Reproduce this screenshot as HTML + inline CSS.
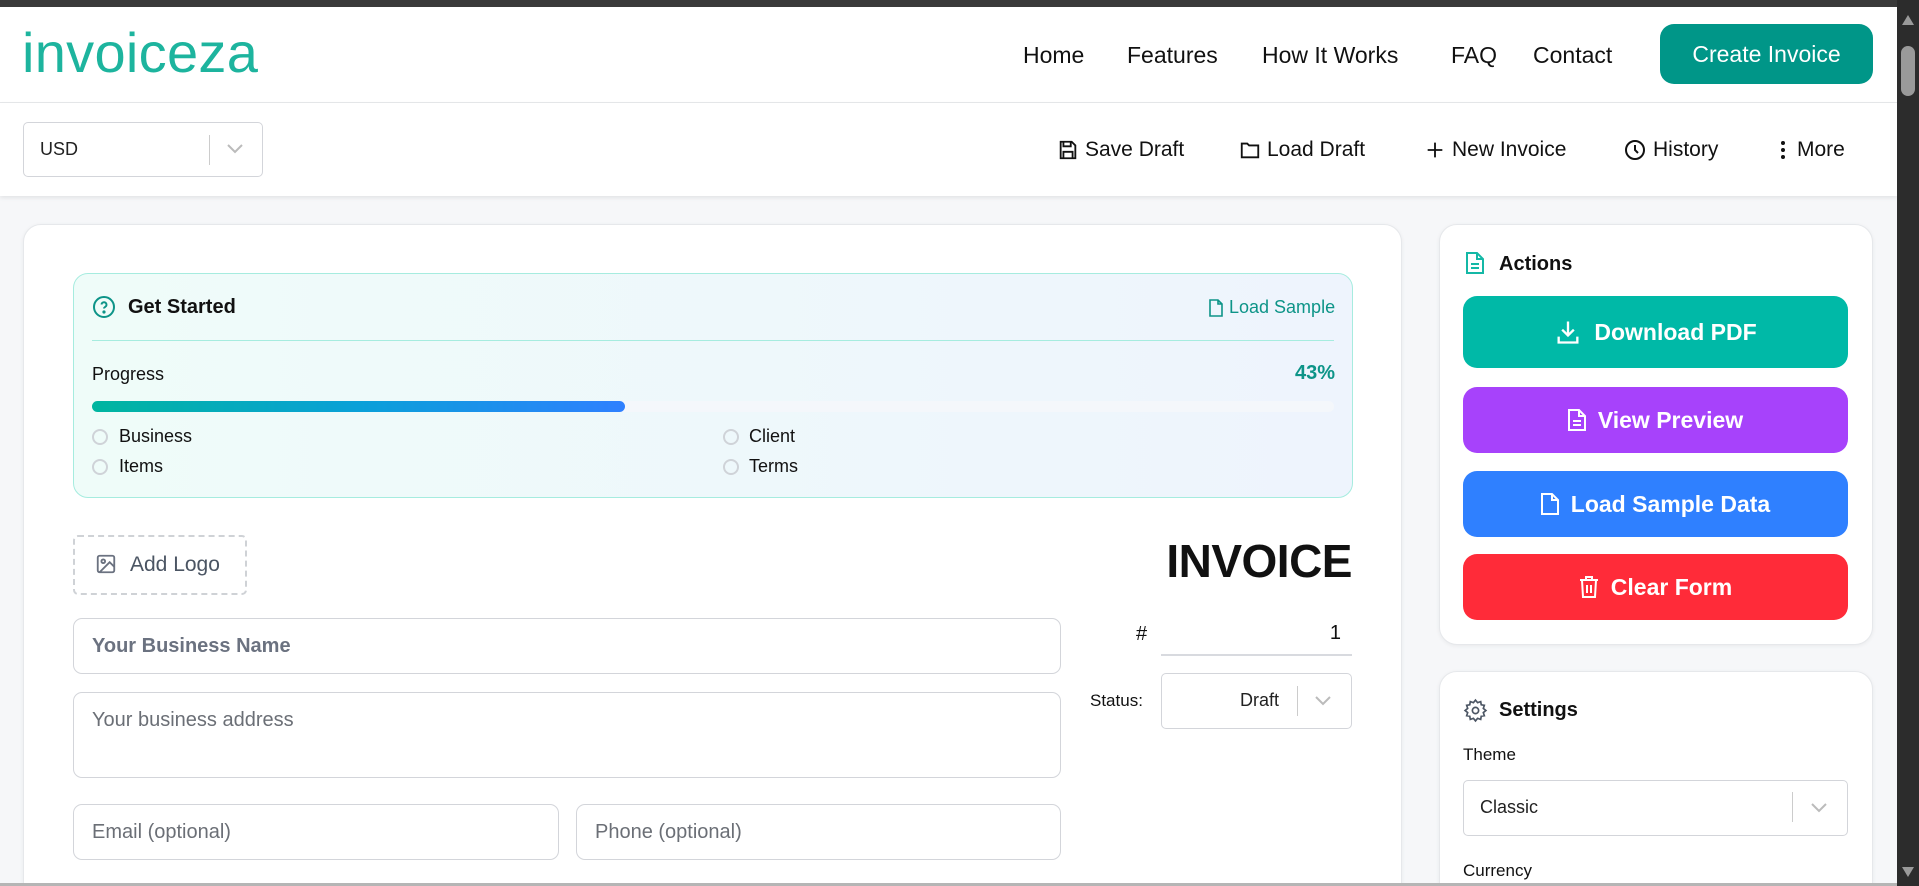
<!DOCTYPE html>
<html style="overflow:hidden;width:1919px;height:886px"><head><meta charset="utf-8"><style>
*{box-sizing:border-box;margin:0;padding:0}
body{width:1919px;height:886px;overflow:hidden;background:#f6f7f9;font-family:"Liberation Sans",sans-serif;color:#111;position:relative}
.a{position:absolute}
.topbar{left:0;top:0;width:1919px;height:7px;background:#3a3a3a}
.sb{left:1897px;top:0;width:22px;height:886px;background:#2c2c2c}
.nav{left:0;top:7px;width:1897px;height:96px;background:#fff;border-bottom:1px solid #e6e7ea}
.logo{left:22px;top:20px;font-size:56px;color:#1db49e;letter-spacing:0.3px}
.nl{top:42px;font-size:23px;color:#111}
.cbtn{left:1660px;top:24px;width:213px;height:60px;background:#009688;border-radius:14px;color:#fff;font-size:23px;text-align:center;line-height:60px}
.tb{left:0;top:103px;width:1897px;height:93px;background:#fff;box-shadow:0 2px 4px rgba(0,0,0,.08)}
.sel{border:1px solid #d3d5da;border-radius:5px;background:#fff}
.ti{top:138px;font-size:21px;color:#111;display:flex;align-items:center;gap:6px}
.card{background:#fff;border:1px solid #e6e8eb;border-radius:18px;box-shadow:0 1px 4px rgba(0,0,0,.06)}
.inp{border:1px solid #d3d5da;border-radius:9px;background:#fff;color:#6b6f76;font-size:20px;padding-left:18px}
.btn{left:1463px;width:385px;border-radius:14px;color:#fff;font-size:23px;font-weight:bold;display:flex;align-items:center;justify-content:center;gap:12px}
.ci{width:16px;height:16px;border:2px solid #cfd3d8;border-radius:50%}
</style></head><body>
<div class="a topbar"></div>
<div class="a nav"></div>
<div class="a logo">invoiceza</div>
<div class="a nl" style="left:1023px">Home</div>
<div class="a nl" style="left:1127px">Features</div>
<div class="a nl" style="left:1262px">How It Works</div>
<div class="a nl" style="left:1451px">FAQ</div>
<div class="a nl" style="left:1533px">Contact</div>
<div class="a cbtn">Create Invoice</div>

<div class="a tb"></div>
<div class="a sel" style="left:23px;top:122px;width:240px;height:55px"></div>
<div class="a" style="left:40px;top:139px;font-size:18px;color:#222">USD</div>
<div class="a" style="left:209px;top:135px;width:1px;height:30px;background:#ccc"></div>
<svg class="a" style="left:226px;top:143px" width="18" height="12" viewBox="0 0 18 12"><path d="M2 2l7 7 7-7" fill="none" stroke="#bbb" stroke-width="2"/></svg>

<div class="a ti" style="left:1057px"><svg width="22" height="22" viewBox="0 0 24 24" fill="none" stroke="#111" stroke-width="2"><path d="M5 3h11l4 4v14H4V3z"/><path d="M7 3v5h8V3M7 21v-7h10v7"/></svg>Save Draft</div>
<div class="a ti" style="left:1239px"><svg width="22" height="22" viewBox="0 0 24 24" fill="none" stroke="#111" stroke-width="2"><path d="M3 5h6l2 2h10v13H3z"/></svg>Load Draft</div>
<div class="a ti" style="left:1424px"><svg width="22" height="22" viewBox="0 0 24 24" fill="none" stroke="#111" stroke-width="2"><path d="M12 4v16M4 12h16"/></svg>New Invoice</div>
<div class="a ti" style="left:1623px"><svg width="24" height="24" viewBox="0 0 24 24" fill="none" stroke="#111" stroke-width="2"><circle cx="12" cy="12" r="9"/><path d="M12 7v5l3 3"/></svg>History</div>
<div class="a ti" style="left:1775px"><svg width="16" height="22" viewBox="0 0 16 22" fill="#111"><circle cx="8" cy="4" r="2"/><circle cx="8" cy="11" r="2"/><circle cx="8" cy="18" r="2"/></svg>More</div>

<div class="a card" style="left:23px;top:224px;width:1379px;height:680px"></div>
<div class="a" style="left:73px;top:273px;width:1280px;height:225px;border:1px solid #a6ecdf;border-radius:15px;background:linear-gradient(90deg,#effcf9,#eef4fd)"></div>
<svg class="a" style="left:92px;top:295px" width="24" height="24" viewBox="0 0 24 24" fill="none" stroke="#0d9488" stroke-width="2"><circle cx="12" cy="12" r="10"/><path d="M9.5 9.5a2.5 2.5 0 015 .5c0 1.7-2.5 2-2.5 3.5"/><circle cx="12" cy="17" r=".6" fill="#0d9488"/></svg>
<div class="a" style="left:128px;top:296px;font-size:20px;font-weight:bold">Get Started</div>
<div class="a" style="left:1209px;top:297px;font-size:18px;color:#0d9488;display:flex;align-items:center;gap:6px"><svg width="14" height="18" viewBox="0 0 14 18" fill="none" stroke="#0d9488" stroke-width="1.6"><path d="M1 1h8l4 4v12H1z M9 1v4h4"/></svg>Load Sample</div>
<div class="a" style="left:92px;top:340px;width:1242px;height:1px;background:#a6ecdf"></div>
<div class="a" style="left:92px;top:364px;font-size:18px">Progress</div>
<div class="a" style="left:1285px;top:362px;width:50px;text-align:right;font-size:20px;font-weight:bold;color:#0d9488">43%</div>
<div class="a" style="left:92px;top:401px;width:1242px;height:11px;border-radius:6px;background:#f4f7fb"></div>
<div class="a" style="left:92px;top:401px;width:533px;height:11px;border-radius:6px;background:linear-gradient(90deg,#00b59f,#0aa0d8,#2f80ff)"></div>
<div class="a ci" style="left:92px;top:429px"></div><div class="a" style="left:119px;top:426px;font-size:18px">Business</div>
<div class="a ci" style="left:92px;top:459px"></div><div class="a" style="left:119px;top:456px;font-size:18px">Items</div>
<div class="a ci" style="left:723px;top:429px"></div><div class="a" style="left:749px;top:426px;font-size:18px">Client</div>
<div class="a ci" style="left:723px;top:459px"></div><div class="a" style="left:749px;top:456px;font-size:18px">Terms</div>

<div class="a" style="left:73px;top:535px;width:174px;height:60px;border:2px dashed #cfd2d6;border-radius:5px"></div>
<svg class="a" style="left:95px;top:553px" width="22" height="22" viewBox="0 0 24 24" fill="none" stroke="#6b7280" stroke-width="2"><rect x="3" y="3" width="18" height="18" rx="2"/><circle cx="9" cy="9" r="2"/><path d="M21 15l-5-5L5 21"/></svg>
<div class="a" style="left:130px;top:553px;font-size:21px;color:#4b5563">Add Logo</div>
<div class="a" style="left:1100px;top:534px;width:252px;text-align:right;font-size:46px;font-weight:bold;letter-spacing:-0.5px">INVOICE</div>

<div class="a inp" style="left:73px;top:618px;width:988px;height:56px;line-height:54px;font-weight:bold;color:#6b7280">Your Business Name</div>
<div class="a inp" style="left:73px;top:692px;width:988px;height:86px;padding-top:16px">Your business address</div>
<div class="a inp" style="left:73px;top:804px;width:486px;height:56px;line-height:54px">Email (optional)</div>
<div class="a inp" style="left:576px;top:804px;width:485px;height:56px;line-height:54px">Phone (optional)</div>

<div class="a" style="left:1136px;top:623px;font-size:20px">#</div>
<div class="a" style="left:1161px;top:622px;width:180px;text-align:right;font-size:20px">1</div>
<div class="a" style="left:1161px;top:654px;width:191px;height:2px;background:#d8dadf"></div>
<div class="a" style="left:1090px;top:691px;font-size:17px">Status:</div>
<div class="a sel" style="left:1161px;top:673px;width:191px;height:56px"></div>
<div class="a" style="left:1240px;top:690px;font-size:18px;color:#222">Draft</div>
<div class="a" style="left:1297px;top:686px;width:1px;height:30px;background:#ccc"></div>
<svg class="a" style="left:1314px;top:695px" width="18" height="12" viewBox="0 0 18 12"><path d="M2 2l7 7 7-7" fill="none" stroke="#bbb" stroke-width="2"/></svg>

<div class="a card" style="left:1439px;top:224px;width:434px;height:421px"></div>
<svg class="a" style="left:1466px;top:252px" width="18" height="22" viewBox="0 0 18 22" fill="none" stroke="#14b8a6" stroke-width="2"><path d="M1 1h10l6 6v14H1z M11 1v6h6 M5 12h8M5 16h8"/></svg>
<div class="a" style="left:1499px;top:253px;font-size:20px;font-weight:bold">Actions</div>
<div class="a btn" style="top:296px;height:72px;background:#00b9a7"><svg width="28" height="28" viewBox="0 0 24 24" fill="none" stroke="#fff" stroke-width="2"><path d="M12 3v12M7 10l5 5 5-5M4 16v5h16v-5"/></svg>Download PDF</div>
<div class="a btn" style="top:387px;height:66px;background:#a742fb"><svg width="18" height="22" viewBox="0 0 18 22" fill="none" stroke="#fff" stroke-width="2"><path d="M1 1h10l6 6v14H1z M11 1v6h6 M5 12h8M5 16h8"/></svg>View Preview</div>
<div class="a btn" style="top:471px;height:66px;background:#2f80ff"><svg width="18" height="22" viewBox="0 0 18 22" fill="none" stroke="#fff" stroke-width="2"><path d="M1 1h10l6 6v14H1z M11 1v6h6"/></svg>Load Sample Data</div>
<div class="a btn" style="top:554px;height:66px;background:#ff2b39"><svg width="20" height="24" viewBox="0 0 20 24" fill="none" stroke="#fff" stroke-width="2"><path d="M1 5h18M7 5V2h6v3M3 5l1 17h12l1-17M8 10v8M12 10v8"/></svg>Clear Form</div>

<div class="a card" style="left:1439px;top:671px;width:434px;height:240px"></div>
<svg class="a" style="left:1463px;top:698px" width="25" height="25" viewBox="0 0 24 24" fill="none" stroke="#4b5563" stroke-width="1.6"><circle cx="12" cy="12" r="3"/><path d="M12 2l2 2.5 3-1 .5 3 3 .5-1 3L22 12l-2.5 2 1 3-3 .5-.5 3-3-1L12 22l-2-2.5-3 1-.5-3-3-.5 1-3L2 12l2.5-2-1-3 3-.5.5-3 3 1z"/></svg>
<div class="a" style="left:1499px;top:699px;font-size:20px;font-weight:bold">Settings</div>
<div class="a" style="left:1463px;top:745px;font-size:17px">Theme</div>
<div class="a sel" style="left:1463px;top:780px;width:385px;height:56px"></div>
<div class="a" style="left:1480px;top:797px;font-size:18px;color:#222">Classic</div>
<div class="a" style="left:1792px;top:792px;width:1px;height:30px;background:#ccc"></div>
<svg class="a" style="left:1810px;top:802px" width="18" height="12" viewBox="0 0 18 12"><path d="M2 2l7 7 7-7" fill="none" stroke="#bbb" stroke-width="2"/></svg>
<div class="a" style="left:1463px;top:861px;font-size:17px">Currency</div>

<div class="a" style="left:0;top:883px;width:1919px;height:10px;background:#b5b5b5"></div>
<div class="a sb"></div>
<div class="a" style="left:1901px;top:46px;width:14px;height:50px;border-radius:7px;background:#9a9a9a"></div>
<svg class="a" style="left:1901px;top:14px" width="14" height="12"><path d="M7 1l6 10H1z" fill="#9a9a9a"/></svg>
<svg class="a" style="left:1901px;top:866px" width="14" height="12"><path d="M1 1h12L7 11z" fill="#9a9a9a"/></svg>
</body></html>
